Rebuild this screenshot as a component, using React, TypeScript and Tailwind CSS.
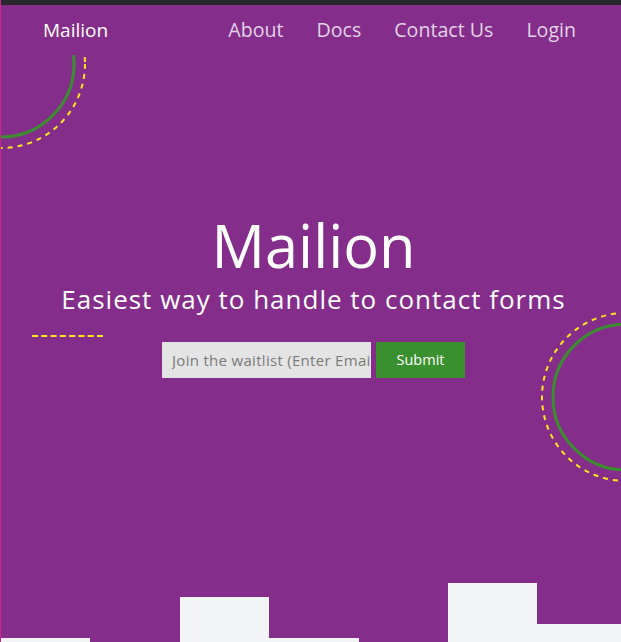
import React from 'react';

const bars = [4, 0, 45, 4, 0, 59, 18];

const Rings: React.FC<{ cx: number; cy: number; w: number; h: number; className: string }> = ({ cx, cy, w, h, className }) => (
    <svg className={className} width={w} height={h} viewBox={`0 0 ${w} ${h}`} fill="none">
        <circle cx={cx} cy={cy} r={73} stroke="#3b8d2f" strokeWidth={3} />
        <circle cx={cx} cy={cy} r={84} stroke="#ffe81a" strokeWidth={2} strokeDasharray="5 5" />
    </svg>
);

export default function App() {
    return (
        <div className="relative h-[642px] w-full overflow-hidden bg-[#852d8b] border-l border-[#c8238f] font-['Open_Sans',sans-serif]">
            <div className="relative z-10 h-[5px] bg-[#29272e]" />

            {/* decorations */}
            <Rings className="absolute left-0 top-0" cx={0} cy={64} w={100} h={160} />
            <Rings className="absolute right-0 top-[300px]" cx={105} cy={97} w={100} h={194} />

            {/* Nav */}
            <nav className="relative z-10 flex h-[50px] items-center justify-between bg-[#852d8b] pl-[42px] pr-[45px]">
                <span className="text-[19px] text-white">Mailion</span>
                <div className="flex items-center gap-[33px] text-[19.6px] text-[#e3d3e6]">
                    <a>About</a>
                    <a>Docs</a>
                    <a>Contact Us</a>
                    <a>Login</a>
                </div>
            </nav>

            {/* Hero */}
            <div className="relative flex flex-col items-center pl-[5px] pt-[159px]">
                <h1 className="text-[59.5px] leading-[62px] text-white">Mailion</h1>
                <p className="mt-[4px] text-[26px] font-medium tracking-[1px] text-white">Easiest way to handle to contact forms</p>
                <div className="mt-[23px] flex gap-[5px]">
                    <input
                        className="h-[36px] w-[209px] bg-[#e4e4e4] pl-[10px] text-[15px] tracking-[0.3px] text-[#555] placeholder:text-[#7a7a7a] outline-none"
                        placeholder="Join the waitlist (Enter Email)"
                    />
                    <button className="h-[36px] w-[89px] bg-[#3a8f2e] text-[14.5px] text-white">Submit</button>
                </div>
            </div>

            <div className="absolute left-[31px] top-[335px] w-[71px] border-t-2 border-dashed border-[#ffe81a]" />

            {/* Bottom steps */}
            <div className="absolute bottom-0 left-0 flex items-end">
                {bars.map((h, i) => (
                    <div key={i} className="w-[89.4px] shrink-0 bg-[#f3f4f6]" style={{ height: h }} />
                ))}
            </div>
        </div>
    );
}
